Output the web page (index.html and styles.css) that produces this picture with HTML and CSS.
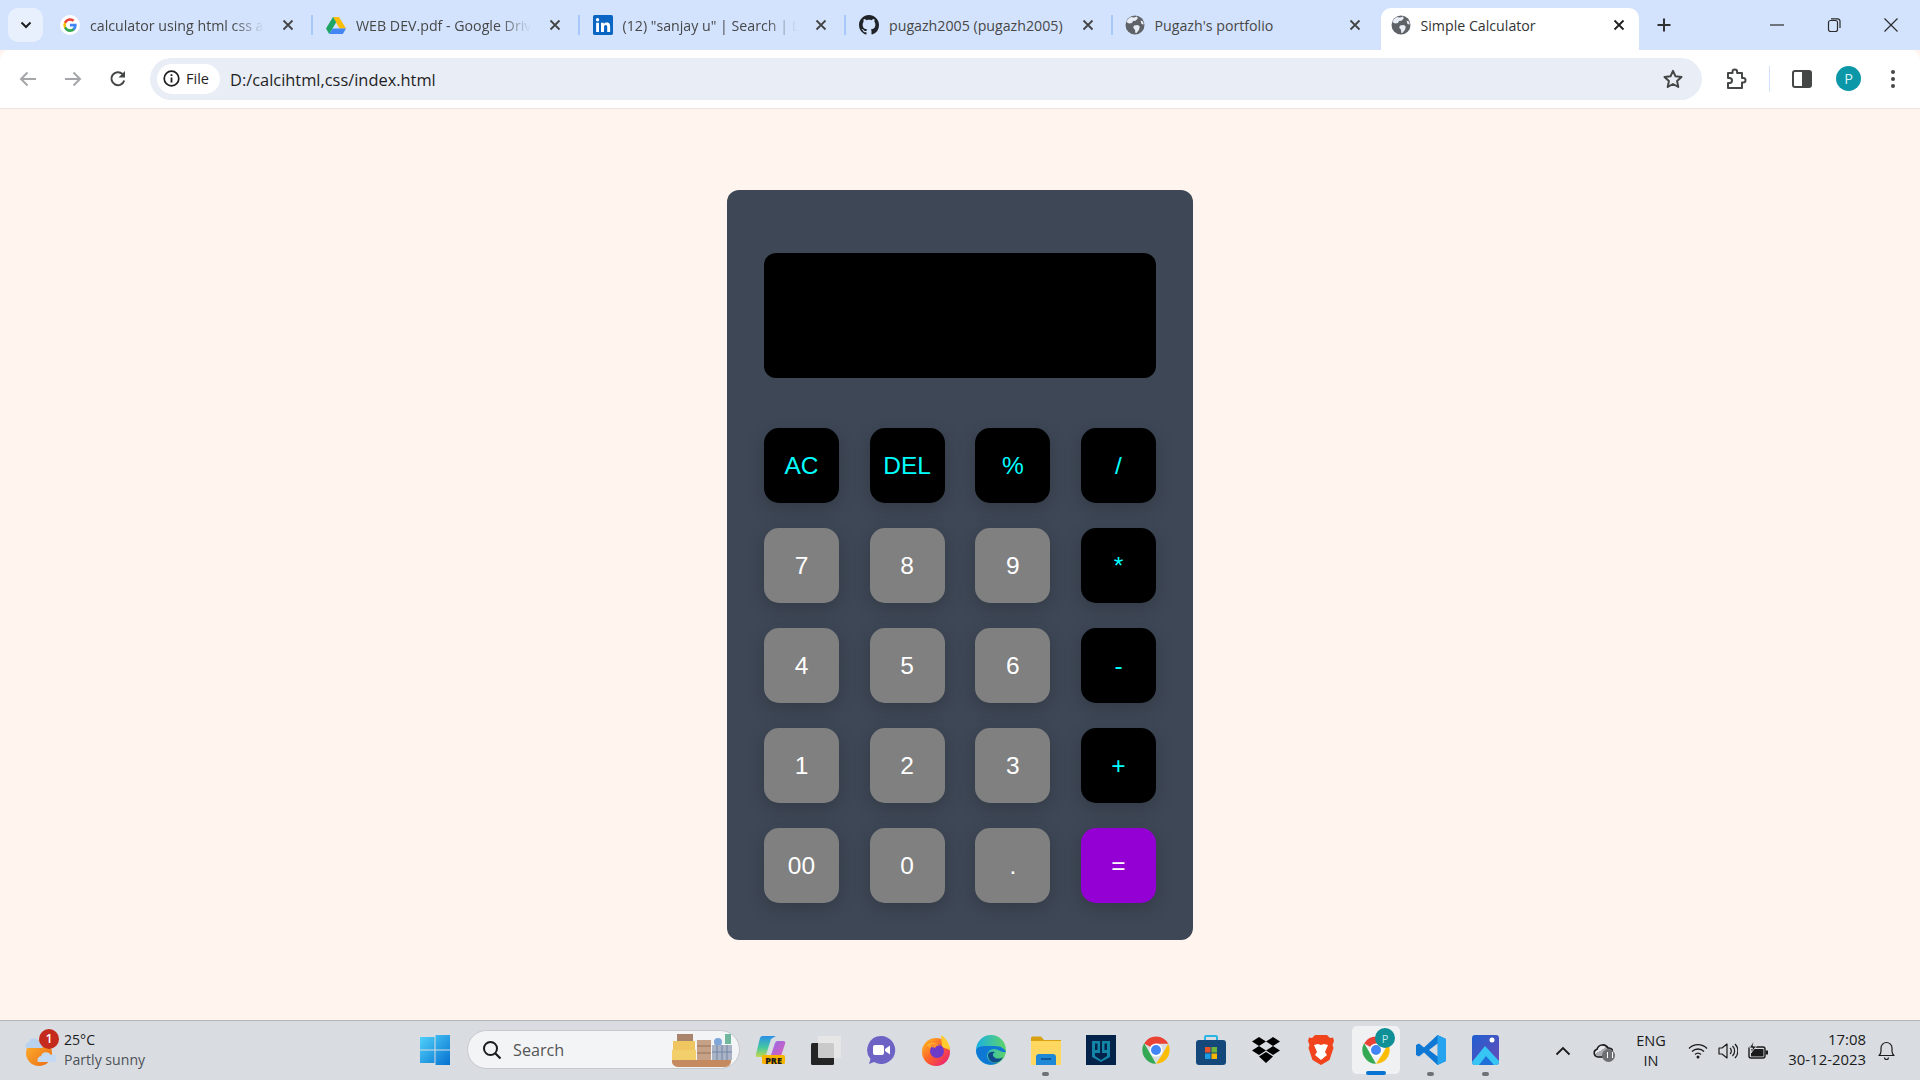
FILE: index.html
```html
<!DOCTYPE html>
<html lang="en">
<head>
<meta charset="utf-8">
<title>Simple Calculator</title>
<link rel="stylesheet" href="styles.css">
</head>
<body>
<svg class="defs" width="0" height="0" aria-hidden="true">
  <defs>
    <symbol id="x" viewBox="0 0 12 12"><path d="M1.500 1.500l9 9M10.500 1.500l-9 9" fill="none" stroke="currentColor" stroke-width="1.800"/></symbol>
    <symbol id="globe" viewBox="0 0 20 20"><circle cx="10" cy="10" r="9.500" fill="#5f6368"/><path d="M6 2l3 .5 3-1 .8 2-2.300 2.200-2.500.3-1 2-3 .4L1.300 7 3 4zM9 10.500l4-.5 1.800 1.800-.8 3-2.500 3.200-1.200-.3-.3-3-1.800-2zM15.500 5.500l2.500 1 .8 3-2.300-.5z" fill="#e9edf6"/></symbol>
    <symbol id="chrome" viewBox="0 0 48 48">
      <path d="M24 24L5 13.500A22 22 0 0 1 43.600 14H24z" fill="#ea4335"/>
      <path d="M24 46A22 22 0 0 1 5 13L16 32z" fill="#34a853"/>
      <path d="M43.500 14A22 22 0 0 1 24 46l10-15z" fill="#fbbc04"/>
      <circle cx="24" cy="24" r="10.500" fill="#fff"/><circle cx="24" cy="24" r="8" fill="#4285f4"/>
    </symbol>
  </defs>
</svg>

<header class="tabstrip">
  <button class="tab-search" type="button"><svg width="12" height="8" viewBox="0 0 12 8"><path d="M1.500 1.500L6 6l4.500-4.500" fill="none" stroke="#1f1f1f" stroke-width="2"/></svg></button>
  <div class="tab first">
    <svg class="fav" viewBox="0 0 20 20"><circle cx="10" cy="10" r="10" fill="#fff"/><path d="M16.600 10.200c0-.5 0-1-.1-1.400H10v2.700h3.700a3.200 3.200 0 0 1-1.400 2.100v1.700h2.300c1.300-1.200 2-3 2-5.100z" fill="#4285f4"/><path d="M10 17c1.900 0 3.400-.6 4.600-1.700l-2.300-1.700c-.6.400-1.400.7-2.300.7-1.800 0-3.300-1.200-3.900-2.800H4.100v1.800A7 7 0 0 0 10 17z" fill="#34a853"/><path d="M6.100 11.500a4.200 4.200 0 0 1 0-2.900V6.800H4.100a7 7 0 0 0 0 6.500z" fill="#fbbc04"/><path d="M10 5.800c1 0 1.900.4 2.600 1l2-2A7 7 0 0 0 4.100 6.800l2 1.800C6.700 7 8.200 5.800 10 5.800z" fill="#ea4335"/></svg>
    <span class="title fade">calculator using html css and javascript</span>
    <svg class="close"><use href="#x"/></svg>
  </div>
  <div class="tab">
    <svg class="fav" viewBox="0 0 20 18"><path d="M7 1h6l7 11.500h-6.500z" fill="#fbbc04"/><path d="M7 1L0 12.500 3.200 18l7-11.800z" fill="#1fa463"/><path d="M6.500 12.500H20L16.800 18H3.200z" fill="#4285f4"/></svg>
    <span class="title fade">WEB DEV.pdf - Google Drive</span>
    <svg class="close"><use href="#x"/></svg>
  </div>
  <div class="tab">
    <svg class="fav" viewBox="0 0 18 18"><rect width="18" height="18" rx="1.500" fill="#0a66c2"/><path d="M2.800 7h2.600v8.200H2.800zM4.100 2.800a1.500 1.500 0 1 1 0 3 1.500 1.500 0 0 1 0-3zM7.200 7h2.500v1.100c.4-.7 1.300-1.300 2.600-1.300 2.700 0 3.100 1.700 3.100 4v4.400h-2.600v-3.900c0-1 0-2.200-1.300-2.200s-1.600 1-1.600 2.100v4H7.200z" fill="#fff"/></svg>
    <span class="title fade">(12) "sanjay u" | Search | LinkedIn</span>
    <svg class="close"><use href="#x"/></svg>
  </div>
  <div class="tab">
    <svg class="fav" viewBox="0 0 16 16"><path fill="#1f2328" d="M8 0C3.580 0 0 3.580 0 8c0 3.540 2.290 6.530 5.470 7.590.4.070.55-.17.55-.38 0-.19-.01-.82-.01-1.490-2.010.37-2.530-.49-2.690-.94-.09-.23-.48-.94-.82-1.130-.28-.15-.68-.52-.01-.53.63-.01 1.080.58 1.230.82.720 1.210 1.870.87 2.330.66.070-.52.28-.87.51-1.070-1.780-.2-3.640-.89-3.640-3.950 0-.87.31-1.590.82-2.150-.08-.2-.36-1.020.08-2.120 0 0 .67-.21 2.200.82.64-.18 1.320-.27 2-.27.68 0 1.360.09 2 .27 1.530-1.040 2.200-.82 2.200-.82.44 1.100.16 1.920.08 2.120.51.56.82 1.270.82 2.150 0 3.070-1.870 3.750-3.650 3.950.29.25.54.73.54 1.480 0 1.070-.01 1.930-.01 2.200 0 .21.15.46.55.38A8.013 8.013 0 0 0 16 8c0-4.420-3.580-8-8-8z"/></svg>
    <span class="title">pugazh2005 (pugazh2005)</span>
    <svg class="close"><use href="#x"/></svg>
  </div>
  <div class="tab last">
    <svg class="fav"><use href="#globe"/></svg>
    <span class="title">Pugazh's portfolio</span>
    <svg class="close"><use href="#x"/></svg>
  </div>
  <div class="tab active">
    <svg class="fav"><use href="#globe"/></svg>
    <span class="title">Simple Calculator</span>
    <svg class="close"><use href="#x"/></svg>
  </div>
  <svg class="newtab" width="16" height="16" viewBox="0 0 16 16"><path d="M8 1.500v13M1.500 8h13" stroke="#303134" stroke-width="2"/></svg>
  <div class="winctl">
    <svg width="14" height="14" viewBox="0 0 14 14"><path d="M0 7h14" stroke="#2b2b2b" stroke-width="1.200"/></svg>
    <svg width="14" height="14" viewBox="0 0 14 14"><rect x="1.500" y="2.500" width="9" height="11" rx="2" fill="none" stroke="#2b2b2b" stroke-width="1.200"/><path d="M4 .8h6.500A2.500 2.500 0 0 1 13 3.300V10" fill="none" stroke="#2b2b2b" stroke-width="1.200"/></svg>
    <svg width="14" height="14" viewBox="0 0 14 14"><path d="M.5.500l13 13M13.500.500l-13 13" stroke="#2b2b2b" stroke-width="1.200"/></svg>
  </div>
</header>

<nav class="toolbar">
  <div class="navbtns">
    <svg width="18" height="16" viewBox="0 0 18 16"><path d="M17 8H2M8.500 1.500L2 8l6.500 6.500" fill="none" stroke="#a4a6a9" stroke-width="2"/></svg>
    <svg width="18" height="16" viewBox="0 0 18 16"><path d="M1 8h15M9.500 1.500L16 8l-6.500 6.500" fill="none" stroke="#a4a6a9" stroke-width="2"/></svg>
    <svg width="18" height="18" viewBox="0 0 18 18"><path d="M15.200 10.500A6.500 6.500 0 1 1 13.500 4" fill="none" stroke="#444746" stroke-width="2"/><path d="M16 1v6.500H9.500z" fill="#444746"/></svg>
  </div>
  <div class="omnibox">
    <div class="chip">
      <svg width="17" height="17" viewBox="0 0 17 17"><circle cx="8.500" cy="8.500" r="7.300" fill="none" stroke="#1f1f1f" stroke-width="1.700"/><path d="M8.500 7.500v5M8.500 4.300v1.800" stroke="#1f1f1f" stroke-width="1.800"/></svg>
      <span>File</span>
    </div>
    <span class="url">D:/calcihtml,css/index.html</span>
    <svg class="star" width="20" height="20" viewBox="0 0 20 20"><path d="M10 1.800l2.500 5.500 6 .7-4.400 4.100 1.200 5.900L10 15l-5.300 3 1.200-5.900L1.500 8l6-.7z" fill="none" stroke="#444746" stroke-width="2" stroke-linejoin="round"/></svg>
  </div>
  <div class="tools">
    <svg class="t-ext" width="22" height="22" viewBox="0 0 22 22"><path d="M3 5h4.500V3.800a2.300 2.300 0 0 1 4.600 0V5H17v5h1.200a2.300 2.300 0 0 1 0 4.600H17V20H3v-5h1.500a2.500 2.500 0 0 0 0-5H3z" fill="none" stroke="#444746" stroke-width="2" stroke-linejoin="round"/></svg>
    <span class="t-sep"></span>
    <svg class="t-side" width="20" height="18" viewBox="0 0 20 18"><rect x="1" y="1" width="18" height="16" rx="2" fill="none" stroke="#444746" stroke-width="2"/><path d="M10 1h8a1 1 0 0 1 1 1v14a1 1 0 0 1-1 1h-8z" fill="#444746"/></svg>
    <span class="avatar">P</span>
    <svg class="t-menu" width="6" height="20" viewBox="0 0 6 20"><circle cx="3" cy="3" r="2" fill="#444746"/><circle cx="3" cy="10" r="2" fill="#444746"/><circle cx="3" cy="17" r="2" fill="#444746"/></svg>
  </div>
</nav>

<main class="page">
  <section class="calc">
    <div class="display"></div>
    <div class="keys">
      <button class="key op" type="button">AC</button>
      <button class="key op" type="button">DEL</button>
      <button class="key op" type="button">%</button>
      <button class="key op" type="button">/</button>
      <button class="key" type="button">7</button>
      <button class="key" type="button">8</button>
      <button class="key" type="button">9</button>
      <button class="key op" type="button">*</button>
      <button class="key" type="button">4</button>
      <button class="key" type="button">5</button>
      <button class="key" type="button">6</button>
      <button class="key op" type="button">-</button>
      <button class="key" type="button">1</button>
      <button class="key" type="button">2</button>
      <button class="key" type="button">3</button>
      <button class="key op" type="button">+</button>
      <button class="key" type="button">00</button>
      <button class="key" type="button">0</button>
      <button class="key" type="button">.</button>
      <button class="key eq" type="button">=</button>
    </div>
  </section>
</main>

<footer class="taskbar">
  <div class="weather">
    <div class="w-icon">
      <svg width="32" height="36" viewBox="0 0 32 36"><defs><linearGradient id="sun" x1="0" y1="0" x2="1" y2="1"><stop offset="0" stop-color="#fdb531"/><stop offset="1" stop-color="#ec6a12"/></linearGradient></defs><circle cx="15" cy="20" r="13" fill="url(#sun)"/><path d="M2 15a4 4 0 0 1 3-6 5.500 5.500 0 0 1 10-1 4 4 0 0 1 3 7z" fill="#b8d2f0"/><path d="M14 29a4 4 0 0 1 3-6 5.500 5.500 0 0 1 10-1 4 4 0 0 1 4 7z" fill="#c4d9f2"/></svg>
      <span class="w-badge">1</span>
    </div>
    <div class="w-text"><span class="w-temp">25°C</span><span class="w-desc">Partly sunny</span></div>
  </div>
  <div class="cell">
    <svg width="30" height="30" viewBox="0 0 30 30"><defs><linearGradient id="win" x1="0" y1="0" x2="1" y2="1"><stop offset="0" stop-color="#52d4fb"/><stop offset="1" stop-color="#0570d0"/></linearGradient></defs><path d="M0 2h14.500v12.500H0zM15.500 0H30v14.500H15.500zM0 15.500h14.500V28H0zM15.500 15.500H30V30H15.500z" fill="url(#win)"/></svg>
  </div>
  <div class="search">
    <svg width="20" height="20" viewBox="0 0 20 20"><circle cx="8.500" cy="8.500" r="6.500" fill="none" stroke="#1b1b1b" stroke-width="2"/><path d="M13 13l5.500 5.500" stroke="#1b1b1b" stroke-width="2.200"/></svg>
    <span class="s-label">Search</span>
    <svg class="s-art" width="62" height="36" viewBox="0 0 62 36"><path d="M0 28h59a6 6 0 0 1-6 7H6a6 6 0 0 1-6-7z" fill="#c58a60"/><rect x="5" y="2" width="16" height="8" fill="#a8846c"/><rect x="1" y="9" width="22" height="9" fill="#efc65f"/><rect x="0" y="18" width="24" height="10" fill="#f3cf6c"/><rect x="25" y="8" width="14" height="20" fill="#c7a088"/><path d="M25 14h14M25 21h14" stroke="#96725c"/><circle cx="46" cy="10" r="4" fill="#7ea6d8"/><rect x="53" y="2" width="6" height="10" fill="#71b79e"/><rect x="40" y="13" width="20" height="15" fill="#aab4c6"/><path d="M45 13v15M50 13v15M55 13v15M40 20h20" stroke="#7285a5"/></svg>
  </div>
  <div class="apps">
    <div class="cell">
      <svg width="30" height="30" viewBox="0 0 30 30"><defs><linearGradient id="cop" x1="0" y1="0" x2="0" y2="1"><stop offset="0" stop-color="#2a8fe8"/><stop offset=".55" stop-color="#45c8a0"/><stop offset="1" stop-color="#c8d84a"/></linearGradient><linearGradient id="cop2" x1="0" y1="0" x2="1" y2="1"><stop offset="0" stop-color="#8a6ce8"/><stop offset="1" stop-color="#e85cb8"/></linearGradient></defs><path d="M7 1h13l-5 3-5 16a3 3 0 0 1-3 2H2a2 2 0 0 1-2-3l4-16a3 3 0 0 1 3-2z" fill="url(#cop)"/><path d="M14 23l5-15a3 3 0 0 1 3-2h5a2 2 0 0 1 2 3l-4 12a3 3 0 0 1-3 2z" fill="url(#cop2)"/><rect x="6" y="20" width="23" height="9" rx="1.500" fill="#f7b500"/></svg>
      <span class="pre">PRE</span>
    </div>
    <div class="cell">
      <svg width="30" height="30" viewBox="0 0 30 30"><rect x="0" y="8" width="23" height="22" rx="1.500" fill="#242424"/><rect x="7" y="1" width="23" height="22" rx="1" fill="#e8e8e8" fill-opacity=".85"/></svg>
    </div>
    <div class="cell">
      <svg width="30" height="30" viewBox="0 0 30 30"><path d="M15 1a14 14 0 1 1-7 26l-5 2 1.500-5A14 14 0 0 1 15 1z" fill="#6d63c5"/><rect x="7" y="10" width="11" height="10" rx="2" fill="#fff"/><path d="M19 14l5-3.500v9L19 16z" fill="#fff"/></svg>
    </div>
    <div class="cell">
      <svg width="30" height="32" viewBox="0 0 30 32"><defs><linearGradient id="fx" x1="0" y1="0" x2="1" y2="1"><stop offset="0" stop-color="#ffc21f"/><stop offset=".5" stop-color="#ff5f2c"/><stop offset="1" stop-color="#e31587"/></linearGradient></defs><circle cx="15" cy="18" r="14" fill="url(#fx)"/><path d="M20 1c5 3 9 9 9 15l-8-3z" fill="#ffcb2e"/><path d="M3 9l3 2c3-2 7-3 11-1l-6 5z" fill="#ffb52e"/><circle cx="16" cy="17" r="7" fill="#6e3bc8"/><path d="M8 12c3-3 9-3 12 0-3-1-5 0-6 2z" fill="#ff8a2e"/></svg>
    </div>
    <div class="cell">
      <svg width="30" height="30" viewBox="0 0 30 30"><defs><linearGradient id="edge" x1="0" y1="0" x2="1" y2="0"><stop offset="0" stop-color="#1ab0e4"/><stop offset="1" stop-color="#5fd368"/></linearGradient></defs><circle cx="15" cy="15" r="15" fill="url(#edge)"/><path d="M0 15A15 15 0 0 0 22 28c-6 1-11-3-11-7 0-5 5-9 11-6 3 1 5 3 8 2-1-3-5-6-11-6C9 11 2 10 0 15z" fill="#0f78d4"/><path d="M12 20c0 6 6 10 12 6 1-1 2-2 3-4-3 2-7 2-9 0-2-2-1-4 1-5-3-1-7 0-7 3z" fill="#114a8b"/></svg>
    </div>
    <div class="cell dot">
      <svg width="30" height="30" viewBox="0 0 30 30"><path d="M0 3a1.500 1.500 0 0 1 1.500-1.500H10L13 5h17v5H0z" fill="#d9a012"/><path d="M0 6h30v24H0z" fill="#fdd75f"/><path d="M5 30v-8a3 3 0 0 1 3-3h14a3 3 0 0 1 3 3v8z" fill="#1f88d6"/><path d="M10 24h10" stroke="#0d5a9b" stroke-width="2"/></svg>
    </div>
    <div class="cell">
      <svg width="30" height="30" viewBox="0 0 30 30"><rect width="30" height="30" fill="#03234a"/><path d="M6 6h8v12H9v3l6 4 6-4v-3h-5V6h8v16l-9 5-9-5zM9 8.500V15h2.500V8.500zM18.500 8.500V15H21V8.500z" fill="#1386a8"/></svg>
    </div>
    <div class="cell">
      <svg width="30" height="30"><use href="#chrome"/></svg>
    </div>
    <div class="cell">
      <svg width="30" height="30" viewBox="0 0 30 30"><path d="M9 5V2a1 1 0 0 1 1-1h10a1 1 0 0 1 1 1v3" fill="none" stroke="#27b5e6" stroke-width="2"/><rect x="0" y="5" width="30" height="25" rx="3" fill="#14487a"/><rect x="9" y="12" width="5.500" height="5.500" fill="#e5532d"/><rect x="15.500" y="12" width="5.500" height="5.500" fill="#6fb53a"/><rect x="9" y="18.500" width="5.500" height="5.500" fill="#1b9be0"/><rect x="15.500" y="18.500" width="5.500" height="5.500" fill="#f7b500"/></svg>
    </div>
    <div class="cell">
      <svg width="30" height="28" viewBox="0 0 30 28"><path d="M8 1l7 4.500L8 10 1 5.500zM22 1l7 4.500L22 10l-7-4.500zM8 10l7 4.500L8 19l-7-4.500zM22 10l7 4.500L22 19l-7-4.500zM15 16l7 4.500L15 27l-7-6.500z" fill="#000"/></svg>
    </div>
    <div class="cell">
      <svg width="26" height="30" viewBox="0 0 26 30"><path d="M7 0h12l3 3 3-.5L26 6l-1.500 4 1 3-4 12L13 30 4.500 25l-4-12 1-3L0 6l1-3.500L4 3z" fill="#f1441d"/><path d="M6 10l4-1 3 1 3-1 4 1-3 7 2 3-6 5-6-5 2-3z" fill="#fff"/></svg>
    </div>
    <div class="cell running">
      <svg width="30" height="30"><use href="#chrome"/></svg>
      <span class="p-badge">P</span>
    </div>
    <div class="cell dot">
      <svg width="30" height="30" viewBox="0 0 30 30"><path d="M21.500 0L30 4v22l-8.500 4L8 17.500 3 21.500 0 20v-10l3-1.500 5 4z" fill="#0f78d4"/><path d="M21.500 0L30 4v22l-8.500 4z" fill="#25a3ee"/><path d="M21.500 8.500L13 15l8.500 6.500z" fill="#d9dde2"/></svg>
    </div>
    <div class="cell dot">
      <svg width="27" height="30" viewBox="0 0 27 30"><defs><linearGradient id="ph" x1="0" y1="0" x2="1" y2="1"><stop offset="0" stop-color="#1e5fd0"/><stop offset="1" stop-color="#6a4bb8"/></linearGradient></defs><rect width="27" height="30" rx="3" fill="url(#ph)"/><circle cx="20" cy="5" r="2.500" fill="#fff"/><path d="M0 27L13 11l14 15v1a3 3 0 0 1-3 3H3a3 3 0 0 1-3-3z" fill="#37c6f4"/><path d="M7 30l7-9 8 9z" fill="#1e6fd8"/></svg>
    </div>
  </div>
  <div class="tray">
    <div class="tray-cell w40"><svg width="16" height="10" viewBox="0 0 16 10"><path d="M1.500 8.500L8 2l6.500 6.500" fill="none" stroke="#1b1b1b" stroke-width="1.800"/></svg></div>
    <div class="tray-cell w40 cloud">
      <svg width="20" height="15" viewBox="0 0 20 15"><defs><linearGradient id="cl" x1="0" y1="0" x2="1" y2="1"><stop offset=".4" stop-color="#e6e8eb"/><stop offset=".4" stop-color="#a9acb0"/></linearGradient></defs><path d="M5 14a4 4 0 0 1-1-7.800A6 6 0 0 1 15 5a4.500 4.500 0 0 1 1 9z" fill="url(#cl)" stroke="#1b1b1b" stroke-width="1.600"/></svg>
      <span class="pause"></span>
    </div>
    <div class="lang"><span>ENG</span><span>IN</span></div>
    <div class="tray-cell w30"><svg width="20" height="16" viewBox="0 0 20 16"><path d="M1 5.500a12.500 12.500 0 0 1 18 0M4 8.500a8.500 8.500 0 0 1 12 0M7 11.500a4.500 4.500 0 0 1 6 0" fill="none" stroke="#1b1b1b" stroke-width="1.300"/><circle cx="10" cy="14" r="1.500" fill="#1b1b1b"/></svg></div>
    <div class="tray-cell w30"><svg width="20" height="18" viewBox="0 0 20 18"><path d="M1 6h3l5-4v14l-5-4H1z" fill="none" stroke="#1b1b1b" stroke-width="1.200" stroke-linejoin="round"/><path d="M12 6a4 4 0 0 1 0 6M14.500 4a7 7 0 0 1 0 10M17 2a10 10 0 0 1 0 14" fill="none" stroke="#1b1b1b" stroke-width="1.200"/></svg></div>
    <div class="tray-cell w30"><svg width="22" height="20" viewBox="0 0 22 20"><rect x="2" y="6" width="16" height="11" rx="2" fill="none" stroke="#1b1b1b" stroke-width="1.400"/><path d="M4 8h12.500v7.500H4z" fill="#1b1b1b"/><rect x="18.500" y="9.500" width="2.500" height="4" fill="#1b1b1b"/><path d="M6.500 0L2.500 7h3l-1.500 5 5.500-7H6z" fill="#1b1b1b" stroke="#dfe2e6" stroke-width=".8"/></svg></div>
    <div class="clock"><span>17:08</span><span>30-12-2023</span></div>
    <div class="tray-cell w40"><svg width="17" height="19" viewBox="0 0 17 19"><path d="M1 14.500c1.500-1 2-2.500 2-4.500V7a5.500 5.500 0 0 1 11 0v3c0 2 .5 3.500 2 4.500z" fill="none" stroke="#1b1b1b" stroke-width="1.200" stroke-linejoin="round"/><path d="M6.500 16.500a2 2 0 0 0 4 0" fill="none" stroke="#1b1b1b" stroke-width="1.200"/></svg></div>
  </div>
</footer>
</body>
</html>
```

FILE: styles.css
```css
* { box-sizing: border-box; }
html, body { margin: 0; height: 100%; }
body {
  display: flex;
  flex-direction: column;
  height: 100vh;
  overflow: hidden;
  background: #fff5ee;
  font-family: "Open Sans", "Liberation Sans", sans-serif;
}
.defs { position: absolute; }
svg { display: block; flex: none; }

/* tab strip */
.tabstrip {
  display: flex;
  align-items: flex-end;
  height: 50px;
  flex: none;
  background: #d3e3fd;
  padding-left: 8px;
  color: #444;
}
.tab-search {
  display: flex;
  align-items: center;
  justify-content: center;
  width: 35px;
  height: 34px;
  margin: 0 3px 8px 0;
  padding: 0;
  border: 0;
  border-radius: 10px;
  background: #e9f0fd;
}
.tab {
  display: flex;
  align-items: center;
  gap: 10px;
  width: 266.500px;
  height: 42px;
  padding: 0 18px 8px 14px;
  position: relative;
  font-size: 14.200px;
  color: #474747;
}
.tab.first { width: 266px; }
.tab::after {
  content: "";
  position: absolute;
  right: -1px;
  top: 7px;
  width: 2px;
  height: 20px;
  background: #a8c7fa;
}
.tab.last { width: 267px; padding-left: 13px; }
.tab.last::after, .tab.active::after { display: none; }
.fav { width: 20px; height: 20px; }
.title { flex: 1; white-space: nowrap; overflow: hidden; min-width: 0; }
.fade {
  -webkit-mask-image: linear-gradient(90deg, #000 82%, transparent 100%);
  mask-image: linear-gradient(90deg, #000 82%, transparent 100%);
}
.close { width: 12px; height: 12px; color: #444; margin-left: 8px; }
.tab.active {
  width: 258px;
  margin-left: 2px;
  padding: 0 14px 8px 10px;
  background: #fff;
  border-radius: 10px 10px 0 0;
  color: #333;
}
.tab.active .close { color: #1f1f1f; }
.newtab { margin: 0 0 17px 17px; }
.winctl {
  display: flex;
  gap: 43px;
  margin: 0 22px 18px auto;
}

/* toolbar */
.toolbar {
  display: flex;
  align-items: center;
  flex: none;
  height: 59px;
  background: #fff;
  border-bottom: 1px solid #ebe6e0;
  border-radius: 10px 10px 0 0;
  padding: 0 19px 1px 19px;
}
.navbtns { display: flex; align-items: center; gap: 27px; width: 131px; }
.omnibox {
  display: flex;
  align-items: center;
  width: 1552px;
  height: 42px;
  padding: 0 19px 0 7px;
  background: #e9edf6;
  border-radius: 21px;
}
.chip {
  display: flex;
  align-items: center;
  gap: 6px;
  width: 63px;
  height: 30px;
  padding-left: 6px;
  background: #fff;
  border-radius: 15px;
  font-size: 14.500px;
  color: #1f1f1f;
}
.url { margin-left: 10px; flex: 1; padding-top: 1px; font-size: 16.400px; color: #1f1f1f; }
.tools { display: flex; align-items: center; flex: 1; }
.t-ext { margin-left: 23px; }
.t-sep { width: 1px; height: 26px; background: #d3e3fd; margin-left: 22px; }
.t-side { margin-left: 22px; }
.avatar {
  display: flex;
  align-items: center;
  justify-content: center;
  width: 25px;
  height: 25px;
  margin-left: 24px;
  border-radius: 50%;
  background: #0b97a7;
  color: #d8f4f6;
  font-size: 14.500px;
}
.t-menu { margin-left: 29px; }

/* calculator */
.page {
  flex: 1;
  display: flex;
  align-items: center;
  justify-content: center;
  min-height: 0;
}
.calc {
  width: 466px;
  height: 750px;
  padding: 63px 37px 37px;
  background: #3e4756;
  border-radius: 12px;
}
.display {
  height: 125px;
  margin-bottom: 50px;
  background: #000;
  border-radius: 12px;
}
.keys {
  display: grid;
  grid-template-columns: repeat(4, 75px);
  justify-content: space-between;
  row-gap: 25px;
}
.key {
  width: 75px;
  height: 75px;
  padding: 1px 0 0;
  border: 0;
  border-radius: 15px;
  background: #808080;
  color: #fff;
  font-family: "Liberation Sans", Arial, sans-serif;
  font-size: 24.500px;
  box-shadow: 0 5px 18px rgba(0, 0, 0, 0.18);
}
.key.op { background: #000; color: #0ff; }
.key.eq { background: #9400d3; }

/* taskbar */
.taskbar {
  display: flex;
  align-items: center;
  flex: none;
  height: 60px;
  background: #d9dde2;
  border-top: 1px solid #b4b6b9;
  color: #1b1b1b;
}
.weather { display: flex; align-items: center; width: 407px; padding-left: 24px; }
.w-icon { position: relative; width: 32px; margin-right: 8px; }
.w-badge {
  position: absolute;
  left: 15px;
  top: -4px;
  display: flex;
  align-items: center;
  justify-content: center;
  width: 20px;
  height: 20px;
  border-radius: 50%;
  background: #c42b1c;
  color: #fff;
  font-size: 12.500px;
  font-weight: 600;
}
.w-text { display: flex; flex-direction: column; padding-bottom: 2px; line-height: 20px; font-size: 14.100px; }
.w-desc { color: #4d5156; }
.cell {
  position: relative;
  display: flex;
  align-items: center;
  justify-content: center;
  width: 55px;
  height: 59px;
  padding-bottom: 2px;
}
.search {
  display: flex;
  align-items: center;
  width: 273px;
  height: 39px;
  margin: 0 3px 2px 5px;
  padding: 0 5px 0 14px;
  background: #f3f4f6;
  border: 1px solid #c6c8cb;
  border-radius: 20px;
}
.s-label { flex: 1; margin-left: 11px; font-size: 16.200px; color: #555; }
.apps { display: flex; }
.pre {
  position: absolute;
  left: 19px;
  bottom: 15px;
  width: 23px;
  text-align: center;
  font-size: 9px;
  line-height: 9px;
  font-weight: 800;
  color: #1b1b1b;
}
.dot::after {
  content: "";
  position: absolute;
  left: 24px;
  bottom: 4px;
  width: 7px;
  height: 4px;
  border-radius: 2px;
  background: #6f7275;
}
.running::before {
  content: "";
  position: absolute;
  left: 3.500px;
  top: 5px;
  width: 48px;
  height: 48px;
  border-radius: 5px;
  background: #eff1f3;
}
.running svg { position: relative; }
.running::after {
  content: "";
  position: absolute;
  left: 17.500px;
  bottom: 5px;
  width: 20px;
  height: 4px;
  border-radius: 2px;
  background: #0a74d4;
}
.p-badge {
  position: absolute;
  left: 27px;
  top: 7px;
  display: flex;
  align-items: center;
  justify-content: center;
  width: 20px;
  height: 20px;
  border-radius: 50%;
  background: #0f8f96;
  color: #bfe9ea;
  font-size: 11px;
}
.tray { display: flex; align-items: center; margin-left: 30px; }
.tray-cell { position: relative; display: flex; align-items: center; justify-content: center; height: 40px; }
.w40 { width: 40px; }
.w30 { width: 30px; }
.pause {
  position: absolute;
  left: 19px;
  top: 18px;
  width: 13px;
  height: 13px;
  border-radius: 50%;
  background: #6d6f72;
}
.pause::after {
  content: "";
  position: absolute;
  left: 4.500px;
  top: 3.500px;
  width: 4px;
  height: 6px;
  border-left: 1px solid #fff;
  border-right: 1px solid #fff;
}
.lang {
  display: flex;
  flex-direction: column;
  align-items: center;
  width: 56px;
  margin-right: 4px;
  font-size: 14.500px;
  line-height: 20px;
}
.clock {
  display: flex;
  flex-direction: column;
  align-items: flex-end;
  width: 93px;
  padding-bottom: 3px;
  font-size: 14.900px;
  line-height: 20px;
}
```
